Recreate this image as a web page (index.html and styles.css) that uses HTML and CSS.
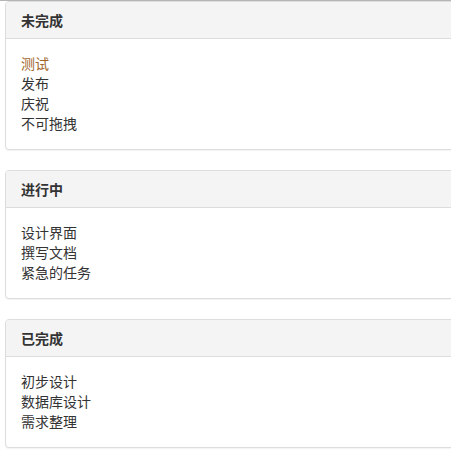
FILE: index.html
```html
<!DOCTYPE html>
<html lang="zh-CN">
<head>
  <meta charset="UTF-8">
  <title>任务看板</title>
  <link rel="stylesheet" href="styles.css">
</head>
<body>

  <div class="board">
    <div class="panel">
      <div class="panel-heading">未完成</div>
      <div class="panel-body">
        <div class="item item-active">测试</div>
        <div class="item">发布</div>
        <div class="item">庆祝</div>
        <div class="item">不可拖拽</div>
      </div>
    </div>

    <div class="panel">
      <div class="panel-heading">进行中</div>
      <div class="panel-body">
        <div class="item">设计界面</div>
        <div class="item">撰写文档</div>
        <div class="item">紧急的任务</div>
      </div>
    </div>

    <div class="panel">
      <div class="panel-heading">已完成</div>
      <div class="panel-body">
        <div class="item">初步设计</div>
        <div class="item">数据库设计</div>
        <div class="item">需求整理</div>
      </div>
    </div>
  </div>

</body>
</html>
```

FILE: styles.css
```css
body {
  margin: 0;
  font-family: "Noto Sans CJK SC", "Liberation Sans", sans-serif;
  font-size: 14px;
  line-height: 20px;
  color: #333;
  background-color: #fff;
  border-top: 1px solid #b5b5b5;
  overflow: hidden;
}
.board {
  padding-left: 5px;
  margin-right: -60px;
}
.panel {
  background-color: #fff;
  border: 1px solid #ddd;
  border-radius: 4px;
  box-shadow: 0 1px 1px rgba(0,0,0,0.05);
  margin-bottom: 20px;
}
.panel-heading {
  background-color: #f4f4f4;
  border-bottom: 1px solid #ddd;
  border-radius: 3px 3px 0 0;
  padding: 10px 15px;
  line-height: 16px;
  font-weight: bold;
  color: #333;
}
.panel-body {
  padding: 14px 15px 16px;
}
.item {
  cursor: move;
}
.item-active {
  color: #a0652a;
}
```
